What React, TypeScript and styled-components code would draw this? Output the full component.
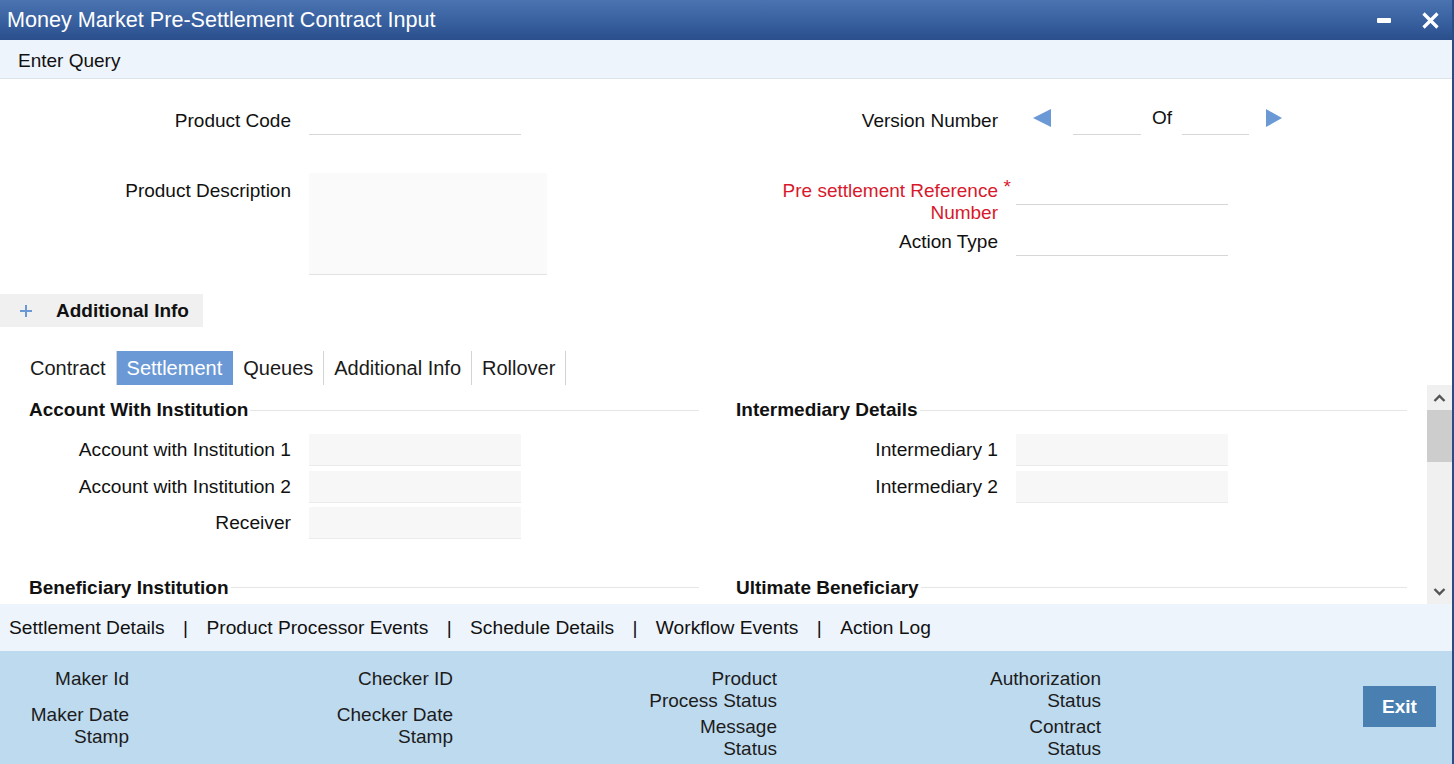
import { Fragment } from "react";
import styled, { createGlobalStyle, css } from "styled-components";

// Page reset and base font
const GlobalStyle = createGlobalStyle`
  * { box-sizing: border-box; }
  html, body { margin: 0; padding: 0; background: #ffffff; }
  body {
    font-family: "Liberation Sans", Arial, sans-serif;
    color: #111111;
  }
`;

const ACCENT = "#6b99d6";
const REQUIRED = "#d8192b";

// Outer window frame
const Window = styled.div`
  width: 1454px;
  height: 764px;
  display: flex;
  flex-direction: column;
  background: #ffffff;
  border-right: 2px solid #2a4b86;
  overflow: hidden;
`;

// Blue title bar with window buttons
const TitleBar = styled.header`
  flex: none;
  height: 40px;
  display: flex;
  align-items: center;
  padding-left: 7px;
  background: linear-gradient(to bottom, #4a73b0 0%, #3a62a1 50%, #2a4e8c 100%);
  color: #ffffff;
`;

const Title = styled.h1`
  flex: 1;
  margin: 0;
  font-size: 21.6px;
  font-weight: normal;
`;

const WindowControls = styled.div`
  display: flex;
  align-items: center;
  gap: 31px;
  margin-right: 13px;
`;

const WindowButton = styled.button`
  display: flex;
  align-items: center;
  justify-content: center;
  padding: 0;
  border: 0;
  background: none;
  color: #ffffff;
  cursor: pointer;
`;

// Action toolbar under the title
const Toolbar = styled.div`
  flex: none;
  height: 39px;
  display: flex;
  align-items: center;
  padding: 3px 0 0 18px;
  background: #eef4fc;
  border-bottom: 1px solid #dde3ea;
  font-size: 19px;
`;

// Header form: two columns of labelled fields
const HeaderGrid = styled.section`
  flex: none;
  display: grid;
  grid-template-columns: 707px 1fr;
  padding-top: 24px;
`;

const FieldColumn = styled.div`
  display: flex;
  flex-direction: column;
`;

const FieldRow = styled.div<{ $top?: number }>`
  display: flex;
  align-items: flex-start;
  margin-top: ${(p) => p.$top ?? 0}px;
`;

const Label = styled.label<{ $required?: boolean }>`
  position: relative;
  flex: none;
  width: 291px;
  padding-top: 7px;
  text-align: right;
  font-size: 19px;
  line-height: 22px;
  white-space: nowrap;
  color: ${(p) => (p.$required ? REQUIRED : "#111111")};

  ${(p) =>
    p.$required &&
    css`
      &::after {
        content: "*";
        position: absolute;
        right: -13px;
        top: 3px;
        color: ${REQUIRED};
      }
    `}
`;

const LineInput = styled.div<{ $width: number }>`
  flex: none;
  margin-left: 18px;
  width: ${(p) => p.$width}px;
  height: 32px;
  border-bottom: 1px solid #d6d6d6;
`;

const TextArea = styled.div`
  flex: none;
  margin-left: 18px;
  width: 238px;
  height: 102px;
  background: #fafafa;
  border-bottom: 1px solid #e2e2e2;
`;

// Version number navigator
const VersionNav = styled.div`
  display: flex;
  align-items: flex-start;
  margin-left: 35px;
`;

const NavArrow = styled.svg<{ $gap?: number }>`
  flex: none;
  margin-top: 6px;
  margin-left: ${(p) => p.$gap ?? 0}px;
  fill: ${ACCENT};
`;

const SmallInput = styled.div<{ $width: number; $gap: number }>`
  flex: none;
  width: ${(p) => p.$width}px;
  height: 32px;
  margin-left: ${(p) => p.$gap}px;
  border-bottom: 1px solid #d6d6d6;
`;

const OfText = styled.span`
  margin: 0 10px 0 11px;
  padding-top: 4px;
  font-size: 19px;
  line-height: 22px;
`;

// "Additional Info" collapsible strip
const Collapsible = styled.button`
  flex: none;
  margin-top: 19px;
  width: 203px;
  height: 33px;
  display: flex;
  align-items: center;
  gap: 24px;
  padding: 0 0 0 20px;
  border: 0;
  background: #f0f0f0;
  font-family: inherit;
  font-size: 19px;
  font-weight: bold;
  color: #111111;
  text-align: left;
`;

// Tab strip
const TabBar = styled.nav`
  flex: none;
  margin-top: 24px;
  height: 34px;
  display: flex;
  padding-left: 20px;
`;

const Tab = styled.div<{ $active?: boolean }>`
  padding: 0 10px;
  line-height: 34px;
  font-size: 20px;
  color: ${(p) => (p.$active ? "#ffffff" : "#1a1a1a")};
  background: ${(p) => (p.$active ? ACCENT : "transparent")};
  border-right: 1px solid ${(p) => (p.$active ? ACCENT : "#d4d4d4")};
`;

// Scrollable tab body
const ScrollArea = styled.div`
  flex: 1;
  min-height: 0;
  display: flex;
`;

const ScrollContent = styled.div`
  flex: 1;
  overflow: hidden;
  display: grid;
  grid-template-columns: 707px 708px;
  align-content: start;
  row-gap: 33px;
  padding-top: 14px;
`;

const Section = styled.div`
  display: flex;
  flex-direction: column;
`;

const SectionTitle = styled.h3`
  display: flex;
  align-items: center;
  margin: 0 0 13px;
  padding: 0 8px 0 29px;
  font-size: 19px;
  line-height: 22px;
  font-weight: bold;
  white-space: nowrap;

  &::after {
    content: "";
    flex: 1;
    height: 1px;
    margin-left: 2px;
    background: #e6e6e6;
  }
`;

const SectionRow = styled.div`
  display: flex;
  align-items: center;
  height: 32px;
  margin-bottom: 4.5px;
`;

const SectionLabel = styled.label`
  flex: none;
  width: 291px;
  text-align: right;
  font-size: 19.2px;
  line-height: 22px;
  white-space: nowrap;
`;

const FilledInput = styled.div`
  flex: none;
  margin-left: 18px;
  width: 212px;
  height: 32px;
  background: #f7f7f7;
  border-bottom: 1px solid #ebebeb;
`;

// Fake vertical scrollbar
const Scrollbar = styled.div`
  flex: none;
  width: 25px;
  display: flex;
  flex-direction: column;
  background: #f0f0f0;
`;

const ScrollButton = styled.div`
  flex: none;
  height: 25px;
  display: flex;
  align-items: center;
  justify-content: center;
`;

const ScrollTrack = styled.div`
  flex: 1;
`;

const ScrollThumb = styled.div`
  height: 52px;
  background: #cdcdcd;
`;

// Links bar
const LinkBar = styled.nav`
  flex: none;
  height: 47px;
  display: flex;
  align-items: center;
  padding: 1px 0 0 9px;
  background: #eef4fc;
  font-size: 19.2px;
  white-space: nowrap;
`;

const LinkItem = styled.a`
  color: #111111;
  text-decoration: none;
`;

const LinkSep = styled.span`
  margin: 0 18.4px;
`;

// Audit footer
const Footer = styled.footer`
  flex: none;
  height: 113px;
  display: flex;
  align-items: flex-start;
  background: #bedaef;
`;

const FooterColumn = styled.div`
  width: 324px;
  padding-top: 17px;
  display: flex;
  flex-direction: column;
`;

const FooterField = styled.div`
  width: 129px;
  min-height: 36px;
  padding-bottom: 4px;
  text-align: right;
  font-size: 19px;
  line-height: 22px;
  white-space: nowrap;
  color: #1c1c1c;
`;

const ExitButton = styled.button`
  margin: 35px 16px 0 auto;
  width: 73px;
  height: 41px;
  border: 0;
  background: #4a80b1;
  color: #ffffff;
  font-family: inherit;
  font-size: 19px;
  font-weight: bold;
`;

const tabs = ["Contract", "Settlement", "Queues", "Additional Info", "Rollover"];
const links = [
  "Settlement Details",
  "Product Processor Events",
  "Schedule Details",
  "Workflow Events",
  "Action Log",
];

const footerColumns: string[][][] = [
  [["Maker Id"], ["Maker Date", "Stamp"]],
  [["Checker ID"], ["Checker Date", "Stamp"]],
  [["Product", "Process Status"], ["Message", "Status"]],
  [["Authorization", "Status"], ["Contract", "Status"]],
];

// only the part of the tab body that is scrolled into view
const settlementSections = [
  {
    title: "Account With Institution",
    fields: ["Account with Institution 1", "Account with Institution 2", "Receiver"],
  },
  { title: "Intermediary Details", fields: ["Intermediary 1", "Intermediary 2"] },
  { title: "Beneficiary Institution", fields: [] as string[] },
  { title: "Ultimate Beneficiary", fields: [] as string[] },
];

function Chevron({ up }: { up?: boolean }) {
  return (
    <svg width="13" height="8" viewBox="0 0 13 8">
      <path
        d={up ? "M1.5 7 L6.5 2 L11.5 7" : "M1.5 1 L6.5 6 L11.5 1"}
        fill="none"
        stroke="#555555"
        strokeWidth="2.4"
      />
    </svg>
  );
}

export default function App() {
  return (
    <>
      <GlobalStyle />
      <Window>
        <TitleBar>
          <Title>Money Market Pre-Settlement Contract Input</Title>
          <WindowControls>
            <WindowButton aria-label="Minimize">
              <svg width="14" height="5" viewBox="0 0 14 5">
                <rect width="14" height="5" rx="1" fill="#ffffff" />
              </svg>
            </WindowButton>
            <WindowButton aria-label="Close">
              <svg width="17" height="17" viewBox="0 0 17 17">
                <path d="M1.5 1.5 L15.5 15.5 M15.5 1.5 L1.5 15.5" stroke="#ffffff" strokeWidth="3.2" />
              </svg>
            </WindowButton>
          </WindowControls>
        </TitleBar>

        <Toolbar>Enter Query</Toolbar>

        <HeaderGrid>
          <FieldColumn>
            <FieldRow>
              <Label>Product Code</Label>
              <LineInput $width={212} />
            </FieldRow>
            <FieldRow $top={38}>
              <Label>Product Description</Label>
              <TextArea />
            </FieldRow>
          </FieldColumn>

          <FieldColumn>
            <FieldRow>
              <Label>Version Number</Label>
              <VersionNav>
                <NavArrow width="18" height="18" viewBox="0 0 18 18">
                  <polygon points="0,9 18,0 18,18" />
                </NavArrow>
                <SmallInput $width={68} $gap={22} />
                <OfText>Of</OfText>
                <SmallInput $width={67} $gap={0} />
                <NavArrow $gap={17} width="16" height="18" viewBox="0 0 16 18">
                  <polygon points="0,0 16,9 0,18" />
                </NavArrow>
              </VersionNav>
            </FieldRow>
            <FieldRow $top={38}>
              <Label $required>
                Pre settlement Reference
                <br />
                Number
              </Label>
              <LineInput $width={212} />
            </FieldRow>
            <FieldRow>
              <Label>Action Type</Label>
              <LineInput $width={212} />
            </FieldRow>
          </FieldColumn>
        </HeaderGrid>

        <Collapsible>
          <svg width="12" height="12" viewBox="0 0 12 12">
            <path d="M6 0 V12 M0 6 H12" stroke={ACCENT} strokeWidth="2" />
          </svg>
          Additional Info
        </Collapsible>

        <TabBar>
          {tabs.map((t) => (
            <Tab key={t} $active={t === "Settlement"}>
              {t}
            </Tab>
          ))}
        </TabBar>

        <ScrollArea>
          <ScrollContent>
            {settlementSections.map((s) => (
              <Section key={s.title}>
                <SectionTitle>{s.title}</SectionTitle>
                {s.fields.map((f) => (
                  <SectionRow key={f}>
                    <SectionLabel>{f}</SectionLabel>
                    <FilledInput />
                  </SectionRow>
                ))}
              </Section>
            ))}
          </ScrollContent>
          <Scrollbar>
            <ScrollButton>
              <Chevron up />
            </ScrollButton>
            <ScrollTrack>
              <ScrollThumb />
            </ScrollTrack>
            <ScrollButton>
              <Chevron />
            </ScrollButton>
          </Scrollbar>
        </ScrollArea>

        <LinkBar>
          {links.map((l, i) => (
            <Fragment key={l}>
              {i > 0 && <LinkSep>|</LinkSep>}
              <LinkItem href="#">{l}</LinkItem>
            </Fragment>
          ))}
        </LinkBar>

        <Footer>
          {footerColumns.map((col, ci) => (
            <FooterColumn key={ci}>
              {col.map((lines) => (
                <FooterField key={lines.join(" ")}>
                  {lines.map((ln, li) => (
                    <Fragment key={ln}>
                      {li > 0 && <br />}
                      {ln}
                    </Fragment>
                  ))}
                </FooterField>
              ))}
            </FooterColumn>
          ))}
          <ExitButton>Exit</ExitButton>
        </Footer>
      </Window>
    </>
  );
}
